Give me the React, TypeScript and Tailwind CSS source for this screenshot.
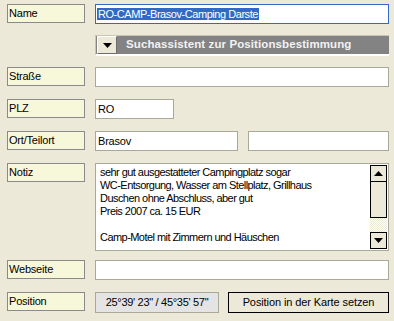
import React from 'react';

const font = { fontFamily: '"Liberation Sans", Arial, sans-serif' };

const Label: React.FC<{ text: string }> = ({ text }) => (
  <div className="w-[78px] h-[19px] shrink-0 border border-[#8a8a8a] bg-[#f7f7da] pl-[1px] text-[11px] tracking-[-0.2px] leading-[17px] text-black">
    {text}
  </div>
);

const Field: React.FC<{ value?: string; className?: string }> = ({ value = '', className = '' }) => (
  <div className={`h-[20px] border border-[#a9a99a] bg-white pl-[2px] text-[11px] tracking-[-0.2px] leading-[18px] text-black ${className}`}>
    {value}
  </div>
);

const Arrow: React.FC<{ up?: boolean }> = ({ up }) => (
  <svg width="9" height="5" viewBox="0 0 9 5">
    {up ? <polygon points="0,5 9,5 4.5,0" fill="#000" /> : <polygon points="0,0 9,0 4.5,5" fill="#000" />}
  </svg>
);

const notes = [
  'sehr gut ausgestatteter Campingplatz sogar',
  'WC-Entsorgung, Wasser am Stellplatz, Grillhaus',
  'Duschen ohne Abschluss, aber gut',
  'Preis 2007 ca. 15 EUR',
  '',
  'Camp-Motel mit Zimmern und Häuschen',
];

const App: React.FC = () => {
  return (
    <div className="w-[394px] h-[321px] bg-[#ece9d8] overflow-hidden pl-[7px] pr-[5px]" style={font}>
      {/* Name */}
      <div className="flex items-start gap-[10px] pt-[4px]">
        <Label text="Name" />
        <div className="h-[20px] flex-1 border border-[#316ac5] bg-white pl-[1px] pt-[1px] text-[11px] tracking-[-0.45px] leading-[16px]">
          <span className="bg-[#316ac5] text-white px-[1px]">RO-CAMP-Brasov-Camping Darste</span>
        </div>
      </div>

      {/* Suchassistent */}
      <div className="ml-[88px] mt-[11px] h-[21px] border-t border-l border-[#c8c5b5] border-b-2 border-b-white bg-[#838383] flex items-center">
        <div className="ml-[1px] w-[20px] h-[18px] bg-[#ece9d8] border-t border-l border-white border-r border-b border-r-[#6d6d6d] border-b-[#6d6d6d] flex items-center justify-center">
          <Arrow />
        </div>
        <div className="ml-[9px] text-[11.5px] font-bold text-[#f2f2f2] tracking-[0.1px]">Suchassistent zur Positionsbestimmung</div>
      </div>

      {/* Straße */}
      <div className="flex items-start gap-[10px] mt-[11px]">
        <Label text="Straße" />
        <Field className="flex-1" />
      </div>

      {/* PLZ */}
      <div className="flex items-start gap-[10px] mt-[12px]">
        <Label text="PLZ" />
        <Field value="RO" className="w-[79px]" />
      </div>

      {/* Ort */}
      <div className="flex items-start gap-[10px] mt-[12px]">
        <Label text="Ort/Teilort" />
        <Field value="Brasov" className="w-[143px]" />
        <Field className="flex-1" />
      </div>

      {/* Notiz */}
      <div className="flex items-start gap-[10px] mt-[12px]">
        <Label text="Notiz" />
        <div className="h-[88px] flex-1 border border-[#a9a99a] bg-white flex">
          <div className="flex-1 pl-[4px] pt-[2px] text-[11px] tracking-[-0.55px] leading-[13px] text-black">
            {notes.map((line, i) => (
              <div key={i} className="h-[13px] whitespace-nowrap">{line}</div>
            ))}
          </div>
          <div className="w-[17px] flex flex-col mr-[1px] mt-[1px] mb-[1px]">
            <div className="h-[17px] border border-black bg-[#ece9d8] flex items-center justify-center">
              <Arrow up />
            </div>
            <div className="h-[36px] border-x border-b border-black bg-[#ece9d8]" />
            <div className="flex-1 bg-[repeating-conic-gradient(#ffffff_0_25%,#ece9d8_0_50%)] bg-[length:2px_2px]" />
            <div className="h-[17px] border border-black bg-[#ece9d8] flex items-center justify-center">
              <Arrow />
            </div>
          </div>
        </div>
      </div>

      {/* Webseite */}
      <div className="flex items-start gap-[10px] mt-[9px]">
        <Label text="Webseite" />
        <Field className="flex-1" />
      </div>

      {/* Position */}
      <div className="flex items-start gap-[10px] mt-[12px]">
        <Label text="Position" />
        <div className="w-[124px] h-[21px] border border-[#a9a99a] bg-[#e4e4e4] text-[11px] tracking-[-0.3px] leading-[19px] text-center text-black">
          25°39' 23" / 45°35' 57"
        </div>
        <div className="flex-1 -ml-[1px] h-[21px] border border-black bg-[#ece9d8] text-[11px] tracking-[-0.1px] leading-[19px] text-center text-black">
          Position in der Karte setzen
        </div>
      </div>
    </div>
  );
};

export default App;
